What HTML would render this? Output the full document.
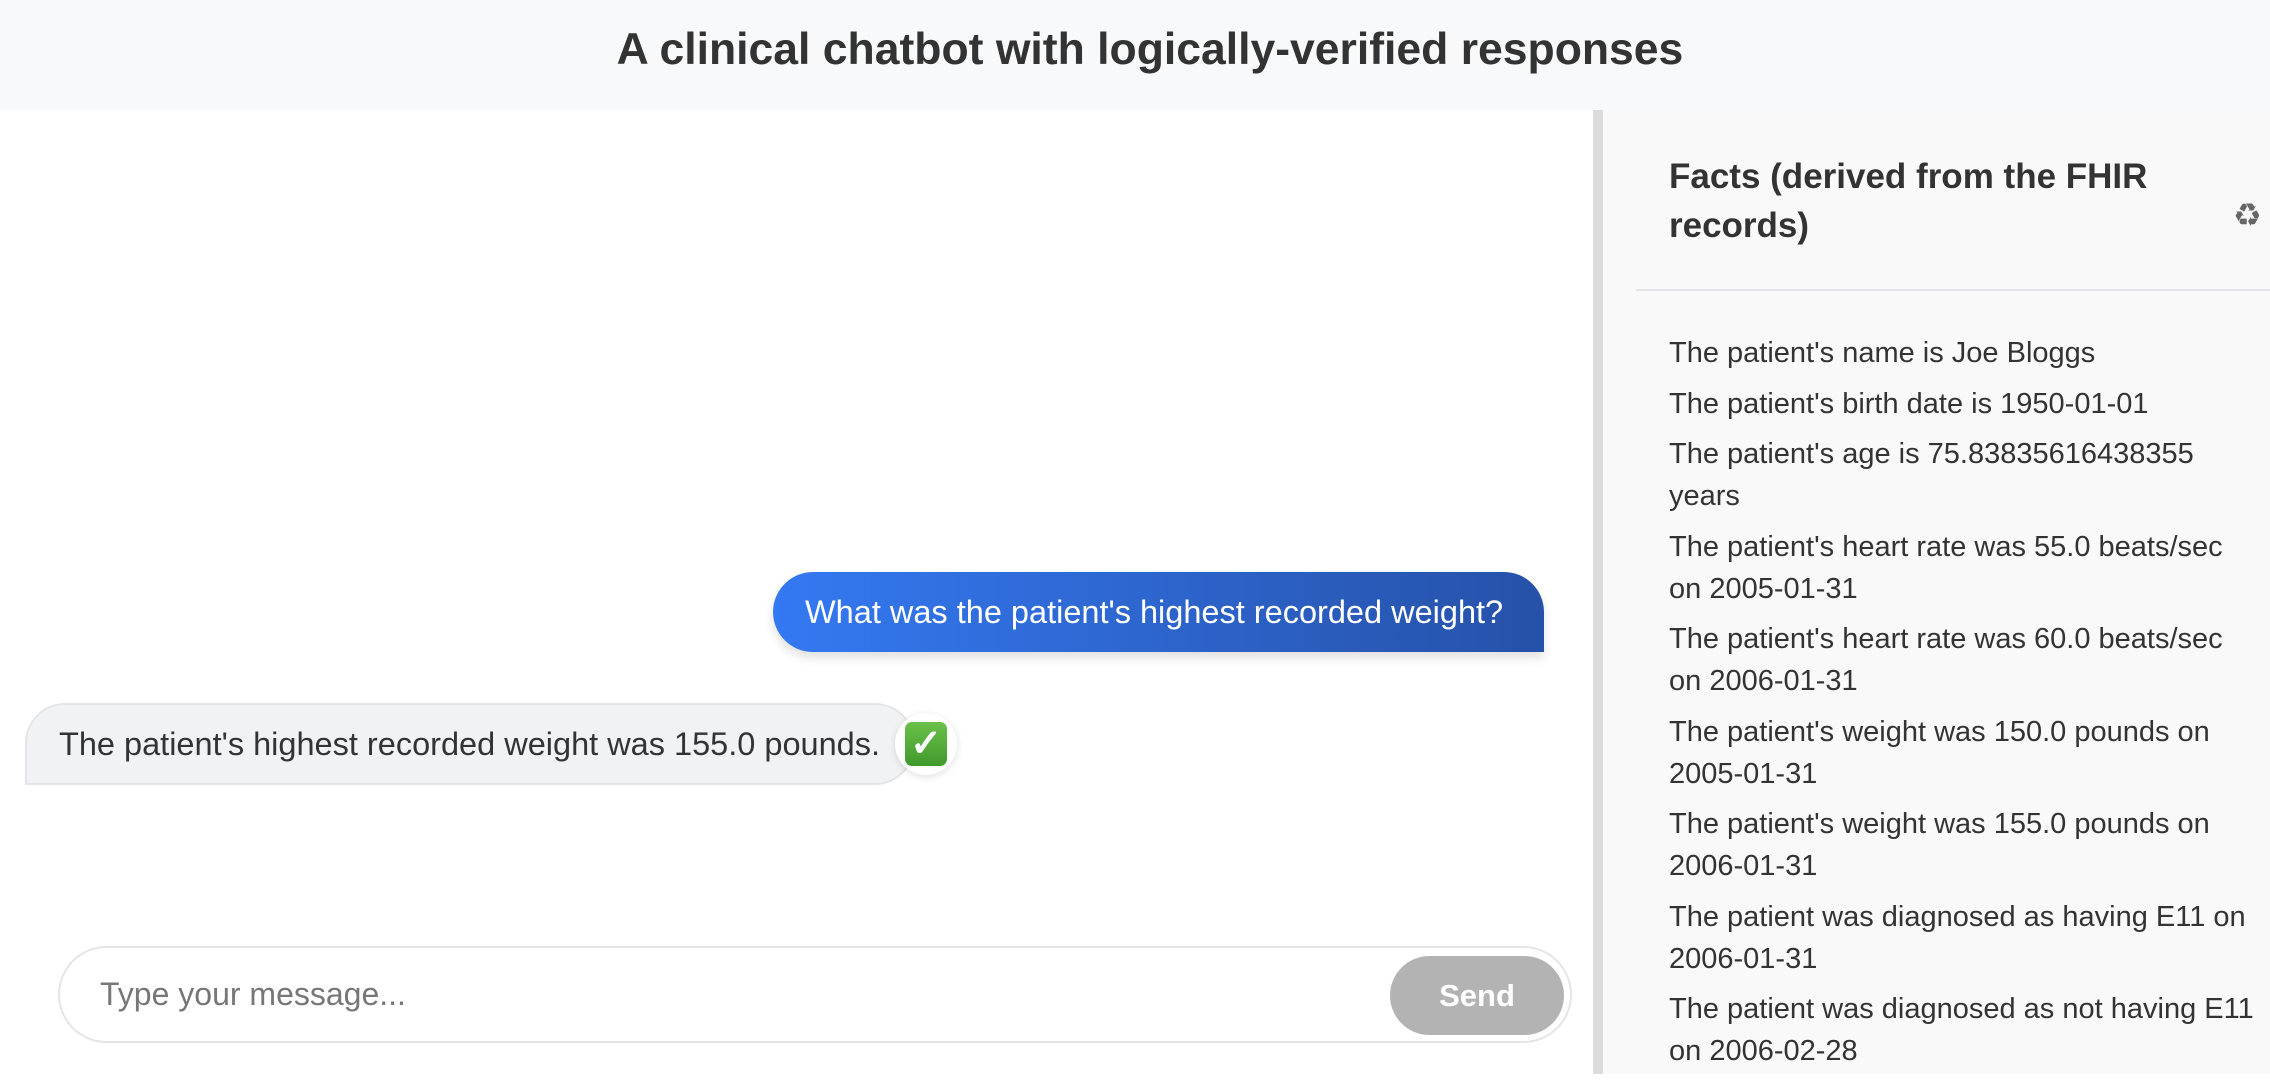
<!DOCTYPE html>
<html><head><meta charset="utf-8"><style>
*{box-sizing:border-box;margin:0;padding:0}
body{width:2270px;height:1074px;overflow:hidden;background:#fff;font-family:"Liberation Sans",Arial,sans-serif;color:#333;position:relative}
.hdr{position:absolute;left:0;top:0;width:2270px;height:110px;background:#f8f9fa;text-align:center;line-height:100px;font-size:44.5px;font-weight:bold;color:#333;padding-left:30px}
.div{position:absolute;left:1593px;top:110px;width:10px;height:964px;background:#dcdcdc}
.panel{position:absolute;left:1603px;top:110px;width:667px;height:964px;background:#f9f9f9}
.ft{position:absolute;left:66px;top:42px;font-size:35px;font-weight:bold;line-height:49px;color:#333;width:520px}
.rec{position:absolute;left:630px;top:86px;font-size:32px;color:#666}
.sep{position:absolute;left:33px;top:179px;right:0;height:2px;background:#e3e5e8}
.list{position:absolute;left:66px;top:222px;width:585px;font-size:29px;line-height:42px;color:#333}
.list div{margin-bottom:8.5px}
.user{position:absolute;left:773px;top:572px;width:771px;height:80px;border-radius:40px 40px 0 40px;background:linear-gradient(90deg,#3479f2,#2651a8);color:#fff;font-size:32.5px;line-height:80px;padding-left:32px;box-shadow:0 6px 10px rgba(0,0,0,.12);white-space:nowrap}
.bot{position:absolute;left:25px;top:703px;width:890px;height:82px;border-radius:40px 40px 40px 0;background:#f1f2f4;border:2px solid #e3e5e8;font-size:32.5px;line-height:78px;padding-left:32px;color:#333;white-space:nowrap}
.chk{position:absolute;left:895px;top:713px;width:62px;height:62px;border-radius:50%;background:#fff;box-shadow:0 2px 8px rgba(0,0,0,.12)}
.chk div{position:absolute;left:10px;top:9px;width:42px;height:44px;border-radius:7px;background:linear-gradient(#6cc04a,#3f9a2c);color:#fff;font-size:38px;line-height:44px;text-align:center;font-weight:bold}
.inp{position:absolute;left:58px;top:946px;width:1514px;height:97px;border:2px solid #e3e5e8;border-radius:49px;background:#fff}
.ph{position:absolute;left:40px;top:0;line-height:93px;font-size:32px;color:#777}
.send{position:absolute;right:6px;top:8px;width:174px;height:79px;border-radius:40px;background:#b3b3b3;color:#fff;font-weight:bold;font-size:31px;text-align:center;line-height:79px}
</style></head><body>
<div class="hdr">A clinical chatbot with logically-verified responses</div>
<div class="div"></div>
<div class="panel">
<div class="ft">Facts (derived from the FHIR records)</div>
<div class="rec">♻</div>
<div class="sep"></div>
<div class="list">
<div>The patient's name is Joe Bloggs</div>
<div>The patient's birth date is 1950-01-01</div>
<div>The patient's age is 75.83835616438355 years</div>
<div>The patient's heart rate was 55.0 beats/sec on 2005-01-31</div>
<div>The patient's heart rate was 60.0 beats/sec on 2006-01-31</div>
<div>The patient's weight was 150.0 pounds on 2005-01-31</div>
<div>The patient's weight was 155.0 pounds on 2006-01-31</div>
<div>The patient was diagnosed as having E11 on 2006-01-31</div>
<div>The patient was diagnosed as not having E11 on 2006-02-28</div>
</div>
</div>
<div class="user">What was the patient's highest recorded weight?</div>
<div class="bot">The patient's highest recorded weight was 155.0 pounds.</div>
<div class="chk"><div>✓</div></div>
<div class="inp"><div class="ph">Type your message...</div><div class="send">Send</div></div>
</body></html>
